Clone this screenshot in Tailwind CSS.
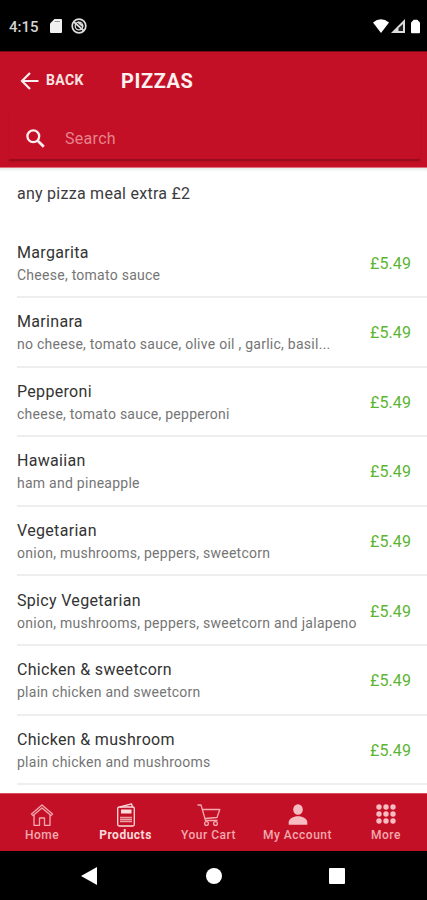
<!DOCTYPE html>
<html lang="en">
<head>
    <meta charset="UTF-8">
    <meta name="viewport" content="width=device-width, initial-scale=1.0">
    <title>Pizzas</title>
    <script src="https://cdn.jsdelivr.net/npm/@tailwindcss/browser@4"></script>
</head>
<body class="bg-white font-[Roboto,sans-serif] antialiased">
<div class="w-[427px] h-[900px] flex flex-col overflow-hidden">

    <!-- Status bar -->
    <div class="h-[51px] shrink-0 bg-black flex items-center pl-[9px] pr-[7px] pt-[1px]">
        <span class="w-[41px] pt-[2px] text-[15px] leading-none font-medium text-[#d4d4d4]">4:15</span>
        <svg class="w-3 h-[14px]" viewBox="0 0 12 14" fill="#f1f1f1"><path d="M4.5 0H11a1 1 0 0 1 1 1v12a1 1 0 0 1-1 1H1a1 1 0 0 1-1-1V4.5z"/><path d="M4.5 2.500h5.500" stroke="#999" stroke-width="1"/></svg>
        <svg class="w-4 h-4 ml-[9px]" viewBox="0 0 16 16" fill="none" stroke="#dedede" stroke-width="1.7"><circle cx="8" cy="8" r="6.8"/><circle cx="8" cy="8" r="3.8" stroke-width="1.3"/><path d="M3 4l9.500 8.500M7 4l5 4.500"/></svg>
        <svg class="w-4 h-[14px] ml-auto" viewBox="0 0 16 14" fill="#fff"><path d="M0 3.500Q8-3 16 3.500L8 14z"/></svg>
        <svg class="w-[14px] h-[14px] ml-[2px]" viewBox="0 0 14 14"><path d="M14 0v14H0z" fill="#ddd"/><path d="M12 5v7H7.500V9z" fill="#222"/></svg>
        <svg class="w-[9px] h-[15px] ml-[6px]" viewBox="0 0 10 15" fill="#fff"><path d="M3 0h4l3 3v11a1 1 0 0 1-1 1H1a1 1 0 0 1-1-1V3z"/></svg>
    </div>

    <!-- Header -->
    <header class="h-[117px] shrink-0 bg-[#c41026] border-t border-[#7d0a18] border-b border-b-[#e0717e] text-white">
        <div class="h-[57px] flex items-center pl-[20px]">
            <svg class="w-[19px] h-[18px]" viewBox="0 0 19 18" fill="none" stroke="#fbeeee" stroke-width="2.200"><path d="M18.500 9H2M10 1L2 9l8 8"/></svg>
            <span class="ml-[7px] w-[75px] text-[14px] font-bold tracking-[0.400px] text-[#f9e2e2]">BACK</span>
            <h1 class="text-[20px] font-bold tracking-[0.600px] text-[#fdf0f0]">PIZZAS</h1>
        </div>
        <div class="h-[52px] ml-[9px] mr-[7px] flex items-center pl-[17px] pt-[9px] border-b-2 border-[#980c1d] shadow-[0_1px_2px_rgba(120,0,15,0.2)]">
            <svg class="w-[19px] h-[19px]" viewBox="0 0 19 19" fill="none" stroke="#fbeeee" stroke-width="2.300"><circle cx="7.300" cy="7.300" r="5.900"/><path d="M11.500 11.500l6.300 6.300" stroke-width="2.700"/></svg>
            <span class="ml-[20px] text-[16px] tracking-[0.3px] text-[#e6838d]">Search</span>
        </div>
    </header>

    <!-- Product list -->
    <main class="flex-1 min-h-0 overflow-hidden text-[#3c3c3c] shadow-[inset_0_4px_3px_-2px_#e9ecec]">
        <p class="h-[60.400px] pl-[17px] pt-[14px] text-[16px] leading-6 tracking-[0.26px]">any pizza meal extra £2</p>
        <ul id="list"></ul>
    </main>

    <!-- Tab bar -->
    <nav class="h-[58px] shrink-0 bg-[#c41026] border-t border-[#d8505f] grid grid-cols-[84px_83px_83px_95px_82px] text-[#f2a9af] text-[12px] leading-[16px] font-medium">
        <a class="flex flex-col items-center pt-[9px]">
            <svg class="w-6 h-6" viewBox="0 0 24 24" fill="none" stroke="currentColor" stroke-width="1.300" stroke-linejoin="round"><path d="M1.500 11L12 2l10.500 9-1.500 1.500L12 5l-9 7.500zM4 12v10.300h5.500V15h5v7.300H20V12"/></svg>
            <span class="tracking-[0.5px]">Home</span>
        </a>
        <a class="flex flex-col items-center pt-[9px] text-[#fbdcdc]">
            <svg class="w-6 h-6" viewBox="0 0 24 24" fill="none" stroke="currentColor" stroke-width="1.300" stroke-linejoin="round"><rect x="3.700" y="4" width="16.600" height="19" rx="1.500"/><path d="M6 4L17.500.8l1 3.200"/><path d="M7 8.500h10.500" stroke-width="4"/><path d="M6 14.500h12M6 16.500h12M6 18.500h12" stroke-width="1.500" opacity=".7"/></svg>
            <span class="font-bold tracking-[0.500px]">Products</span>
        </a>
        <a class="flex flex-col items-center pt-[9px]">
            <svg class="w-6 h-6" viewBox="0 0 24 24" fill="none" stroke="currentColor" stroke-width="1.300" stroke-linejoin="round"><path d="M.5 2H4l4.500 15.500h12M5.500 6.500h17.300l-2.800 8-12 1"/><circle cx="9.500" cy="20.500" r="1.900"/><circle cx="18.500" cy="20.500" r="1.900"/></svg>
            <span class="tracking-[0.5px]">Your Cart</span>
        </a>
        <a class="flex flex-col items-center pt-[9px]">
            <svg class="w-6 h-6" viewBox="0 0 24 24" fill="#f7bcc2"><ellipse cx="12" cy="6.500" rx="4.800" ry="5.300"/><path d="M2.700 21.800v-2.500C3 15.500 7 13.200 12 13.200s9 2.300 9.300 6.100v2.500z"/></svg>
            <span class="tracking-[0.5px]">My Account</span>
        </a>
        <a class="flex flex-col items-center pt-[8px]">
            <svg class="w-6 h-6" viewBox="0 0 24 24" fill="#f7bcc2"><circle cx="5" cy="5" r="2.700"/><circle cx="12" cy="5" r="2.700"/><circle cx="19" cy="5" r="2.700"/><circle cx="5" cy="12" r="2.700"/><circle cx="12" cy="12" r="2.700"/><circle cx="19" cy="12" r="2.700"/><circle cx="5" cy="19" r="2.700"/><circle cx="12" cy="19" r="2.700"/><circle cx="19" cy="19" r="2.700"/></svg>
            <span class="pt-px tracking-[0.5px]">More</span>
        </a>
    </nav>

    <!-- System navigation -->
    <div class="h-[49px] shrink-0 bg-black flex items-center pl-[81px] pr-[82px] justify-between">
        <svg class="w-4 h-[18px]" viewBox="0 0 16 18" fill="#fff"><path d="M16 0v18L0 9z"/></svg>
        <span class="w-4 h-4 ml-px rounded-full bg-white"></span>
        <span class="w-4 h-4 rounded-[1px] bg-white"></span>
    </div>
</div>

<script>
    const products = [
        ['Margarita', 'Cheese, tomato sauce'],
        ['Marinara', 'no cheese, tomato sauce, olive oil , garlic, basil...'],
        ['Pepperoni', 'cheese, tomato sauce, pepperoni'],
        ['Hawaiian', 'ham and pineapple'],
        ['Vegetarian', 'onion, mushrooms, peppers, sweetcorn'],
        ['Spicy Vegetarian', 'onion, mushrooms, peppers, sweetcorn and jalapeno'],
        ['Chicken & sweetcorn', 'plain chicken and sweetcorn'],
        ['Chicken & mushroom', 'plain chicken and mushrooms'],
    ];

    // Every product has the same price
    document.getElementById('list').innerHTML = products.map(([name, desc]) => `
        <li class="h-[69.600px] ml-[17px] pr-[16px] flex items-center justify-between border-b-2 border-[#eeeeee] whitespace-nowrap">
            <div class="pt-[3px]">
                <h2 class="text-[16px] leading-[22px] tracking-[0.32px] text-[#333]">${name.replace('&', '&amp;')}</h2>
                <p class="text-[14px] leading-[22px] tracking-[0.26px] text-[#757575]">${desc}</p>
            </div>
            <span class="pt-[3px] text-[16px] tracking-[0.1px] text-[#5cb531]">£5.49</span>
        </li>`).join('');
</script>
</body>
</html>
